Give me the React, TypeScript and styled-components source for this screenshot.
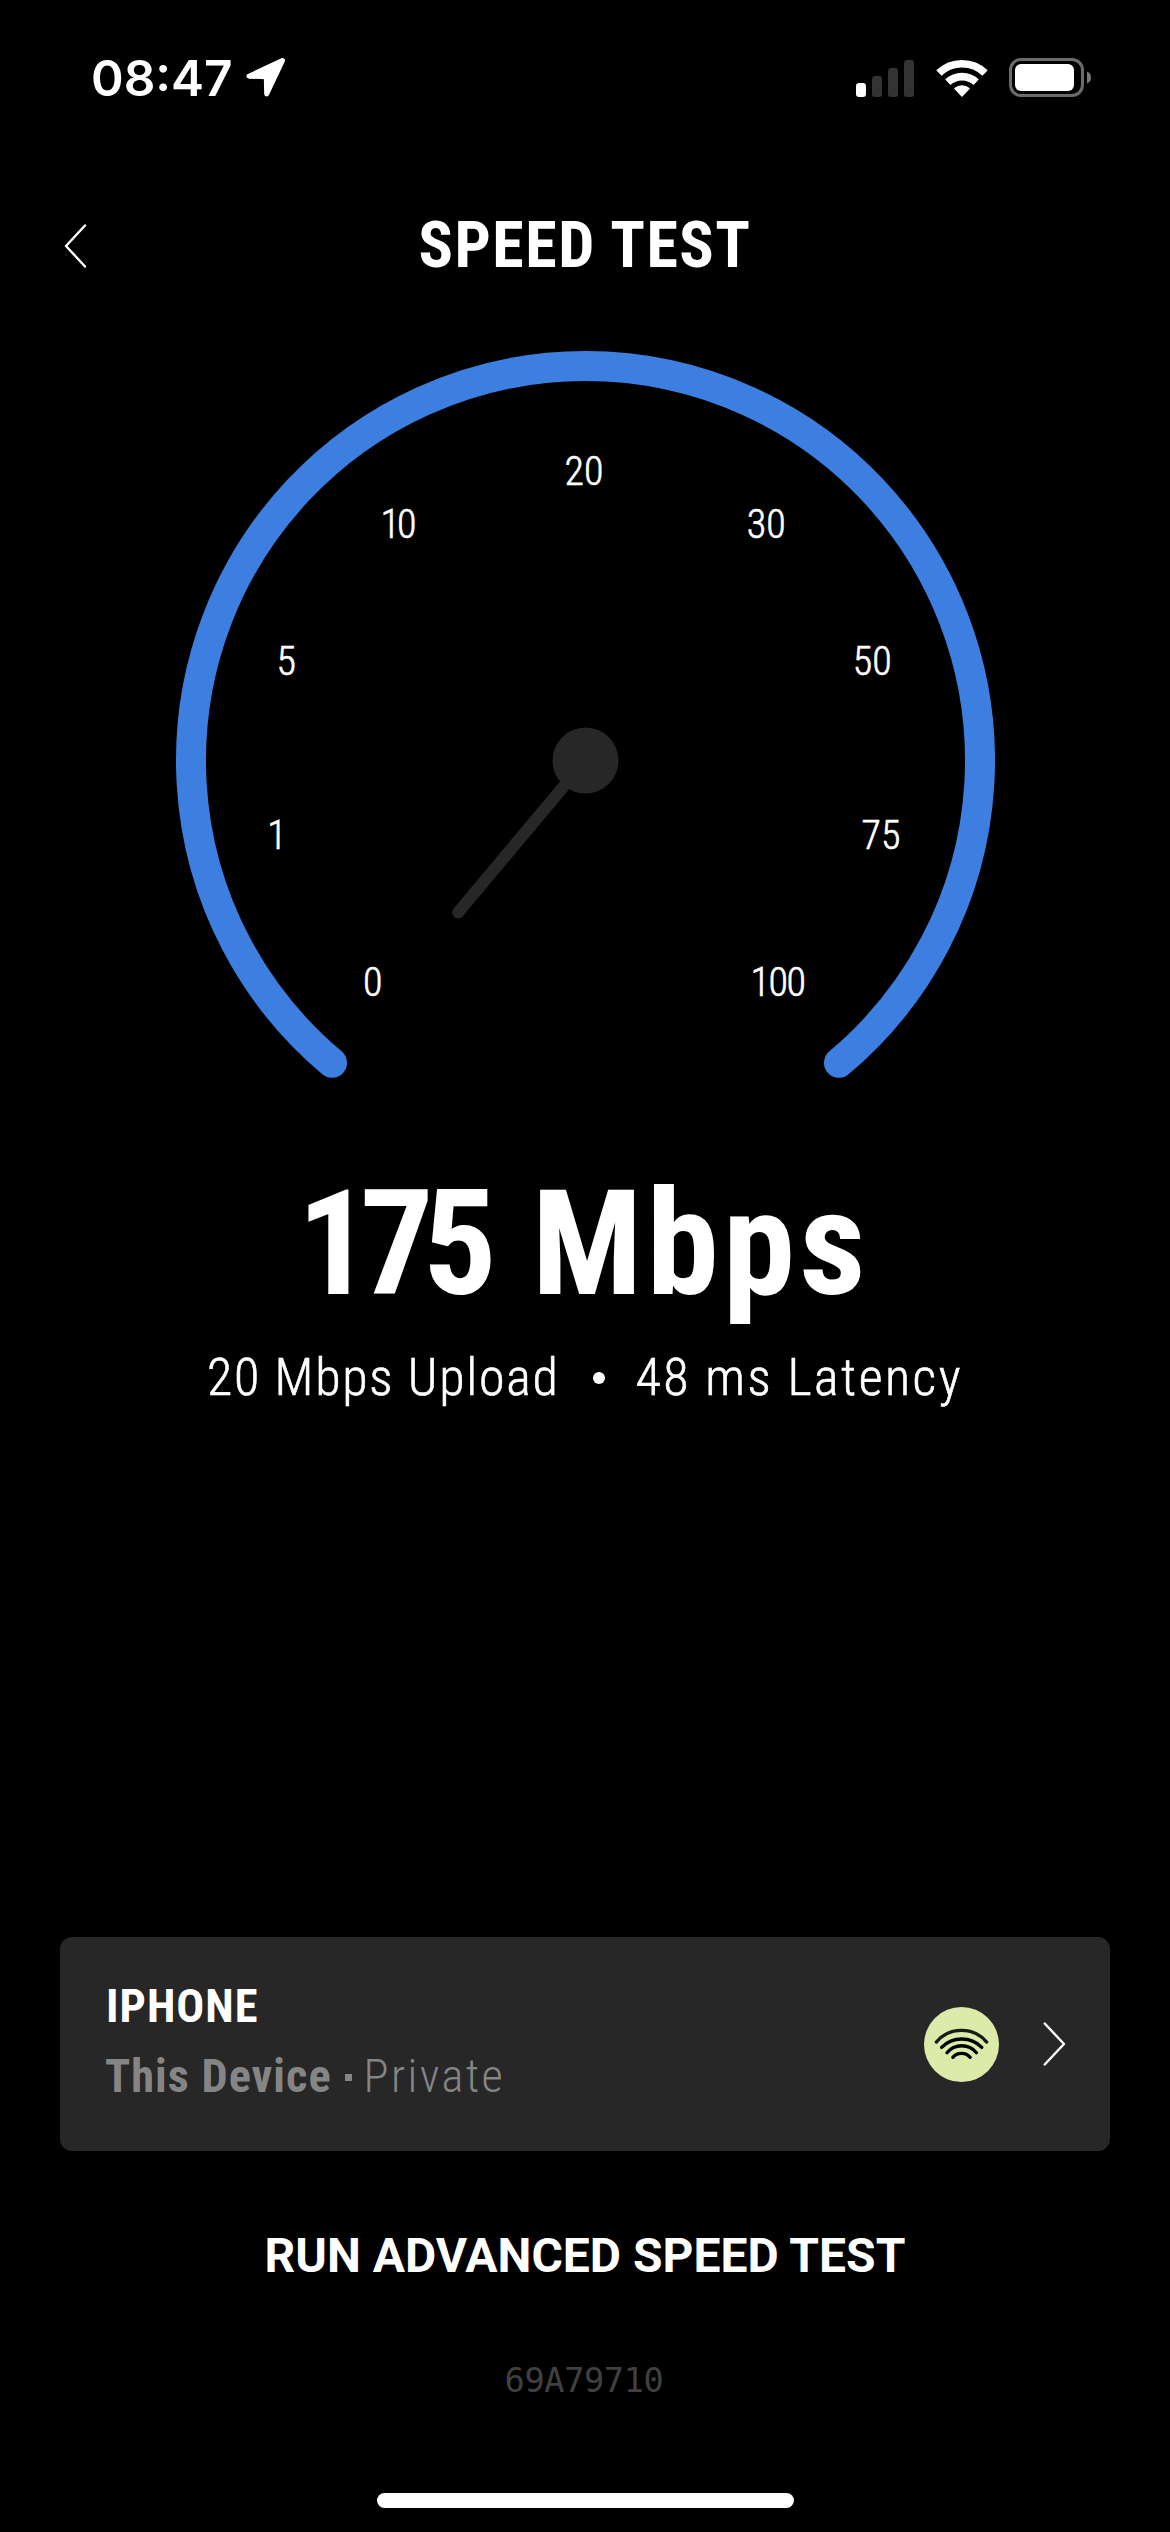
import React from 'react';
import styled, { createGlobalStyle } from 'styled-components';

const GlobalStyle = createGlobalStyle`
  * { box-sizing: border-box; }
  body { margin: 0; background: #000; }
`;

const Screen = styled.main`
  width: 1170px;
  height: 2532px;
  display: flex;
  flex-direction: column;
  align-items: center;
  overflow: hidden;
  background: #000;
  color: #fff;
  font-family: 'Roboto Condensed', Roboto, sans-serif;
`;

const StatusBar = styled.div`
  width: 100%;
  height: 156px;
  padding: 0 79px 0 91px;
  display: flex;
  align-items: center;
  justify-content: space-between;
`;

const StatusGroup = styled.div<{ $gap: number }>`
  display: flex;
  align-items: center;
  gap: ${(p) => p.$gap}px;
`;

const Clock = styled.span`
  font: 600 49.5px/60px Inter, sans-serif;
`;

const Header = styled.header`
  width: 100%;
  height: 180px;
  padding: 0 62px;
  display: grid;
  grid-template-columns: 1fr auto 1fr;
  align-items: center;
`;

const IconButton = styled.button`
  width: 27px;
  padding: 0;
  border: 0;
  background: none;
  color: inherit;
  display: flex;
`;

const Title = styled.h1`
  margin: 0;
  font-size: 64px;
  line-height: 78px;
  font-weight: 700;
  letter-spacing: 1.5px;
`;

const GaugeChart = styled.svg`
  display: block;
  flex: none;
  margin-top: 15px;
`;

const GaugeLabel = styled.text<{ $spacing?: number }>`
  font-size: 40px;
  font-weight: 300;
  letter-spacing: ${(p) => p.$spacing ?? 0}px;
  fill: #fff;
  stroke: #fff;
  stroke-width: 0.6px;
  text-anchor: middle;
`;

const Speed = styled.div`
  margin: 91px 3px 0 0;
  display: flex;
  gap: 46px;
  font-size: 146px;
  line-height: 150px;
  font-weight: 700;
`;

const SpeedPart = styled.span<{ $spacing: number }>`
  letter-spacing: ${(p) => p.$spacing}px;
`;

const Stats = styled.div`
  margin-top: 26px;
  display: flex;
  align-items: center;
  font-size: 52px;
  line-height: 64px;
  font-weight: 300;
  -webkit-text-stroke: 0.6px #fff;
`;

const Stat = styled.span<{ $spacing: number }>`
  letter-spacing: ${(p) => p.$spacing}px;
`;

const Bullet = styled.span`
  width: 12px;
  height: 12px;
  margin: 0 31px 0 33px;
  border-radius: 50%;
  background: #fff;
`;

const DeviceCard = styled.section`
  width: 1050px;
  height: 214px;
  margin-top: auto;
  padding: 0 42px 0 45px;
  display: flex;
  align-items: center;
  justify-content: space-between;
  border-radius: 12px;
  background: #272727;
`;

const DeviceText = styled.div`
  padding-bottom: 6px;
  font-size: 46.4px;
  line-height: 70px;
  font-weight: 700;
`;

const DeviceName = styled.div`
  margin-left: 1px;
  letter-spacing: 1px;
`;

const DeviceMeta = styled.div`
  display: flex;
  align-items: center;
  color: #858585;
  letter-spacing: 1px;
`;

const Dot = styled.span`
  width: 7px;
  height: 7px;
  margin: 3px 12px 0 13px;
  background: #858585;
`;

const Privacy = styled.span`
  font-weight: 300;
  letter-spacing: 2.4px;
`;

const AdvancedButton = styled.button`
  margin-top: 75px;
  padding: 0;
  border: 0;
  background: none;
  color: #fff;
  font: 700 48px/60px Roboto, sans-serif;
`;

const Code = styled.div`
  margin: 75px 2px 0 0;
  color: #404040;
  font: 400 33.6px/40px 'DejaVu Sans Mono', monospace;
  letter-spacing: -0.35px;
`;

const HomeIndicator = styled.div`
  flex: none;
  width: 417px;
  height: 15px;
  margin: 92px 0 24px;
  border-radius: 8px;
  background: #fff;
`;

const LocationIcon = () => (
  <svg width="40" height="42" viewBox="0 0 40 42">
    <path
      d="M36.4 3.6L3 19.2L20.3 19.8L20.7 37Z"
      fill="#fff"
      stroke="#fff"
      strokeWidth="5"
      strokeLinejoin="round"
    />
  </svg>
);

const SignalIcon = () => (
  <svg width="58" height="38" viewBox="0 0 58 38">
    <rect x="0" y="24" width="10" height="14" rx="3" fill="#fff" />
    <rect x="16" y="17" width="10" height="21" rx="3" fill="#333" />
    <rect x="32" y="9" width="10" height="29" rx="3" fill="#333" />
    <rect x="48" y="1" width="10" height="37" rx="3" fill="#333" />
  </svg>
);

const WifiIcon = () => (
  <svg width="52" height="40" viewBox="0 0 52 40">
    <g fill="none" stroke="#fff" strokeWidth="7.6">
      <path d="M2.9 15.1A33.2 33.2 0 0 1 49.1 15.1" />
      <path d="M11.8 24.3A20.5 20.5 0 0 1 40.2 24.3" />
    </g>
    <path
      d="M26 38L18.9 30.5A10.8 10.8 0 0 1 33.1 30.5Z"
      fill="#fff"
      stroke="#fff"
      strokeWidth="1.4"
      strokeLinejoin="round"
    />
  </svg>
);

const BatteryIcon = () => (
  <svg width="82" height="40" viewBox="0 0 82 40">
    <rect x="1.5" y="1.5" width="72" height="36" rx="10.5" fill="none" stroke="#6b6b6b" strokeWidth="3" />
    <rect x="6" y="6" width="59" height="27" rx="6" fill="#fff" />
    <path d="M78 13.5Q82 15 82 19.5T78 25.5Z" fill="#7a7a7a" />
  </svg>
);

const Chevron = ({ back }: { back?: boolean }) => (
  <svg width="27" height="46" viewBox="0 0 27 46">
    <path
      d={back ? 'M23 2.5L4 23L23 43.5' : 'M3.7 2.5L23 23L3.7 43.5'}
      fill="none"
      stroke="#fff"
      strokeWidth="2.4"
      strokeLinecap="round"
      strokeLinejoin="round"
    />
  </svg>
);

const StrengthBadge = () => (
  <svg width="75" height="75" viewBox="0 0 75 75">
    <circle cx="37.5" cy="37.5" r="37.5" fill="#dcebaa" />
    <g fill="none" stroke="#000" strokeWidth="3.3" strokeLinecap="round">
      <path stroke="#1a1a1a" d="M12.3 35.1A32.8 32.8 0 0 1 62.7 35.1" />
      <path d="M17.6 40.4A28.3 28.3 0 0 1 57.8 40.4" />
      <path d="M23 45.7A19 19 0 0 1 52.4 45.7" />
      <path d="M28.8 50.3A11.6 11.6 0 0 1 46.2 50.3" />
    </g>
  </svg>
);

const gaugeLabels = [
  { value: 0, x: 197.7, y: 644.5 },
  { value: 1, x: 102, y: 498 },
  { value: 5, x: 111.3, y: 323.5 },
  { value: 10, x: 222, y: 186.5, spacing: -3 },
  { value: 20, x: 409, y: 133.5 },
  { value: 30, x: 591.3, y: 186.5 },
  { value: 50, x: 697.2, y: 323.5 },
  { value: 75, x: 706, y: 498 },
  { value: 100, x: 602.5, y: 644.5, spacing: -1.5 },
];

const Gauge = () => (
  <GaugeChart width="820" height="728" viewBox="0 0 820 728">
    <path
      d="M157 711.8A394.5 394.5 0 1 1 664 711.8"
      fill="none"
      stroke="#3d7fe0"
      strokeWidth="30"
      strokeLinecap="round"
    />
    {gaugeLabels.map((l) => (
      <GaugeLabel key={l.value} x={l.x} y={l.y} $spacing={l.spacing}>
        {l.value}
      </GaugeLabel>
    ))}
    <path d="M410.5 409.5L283.2 561.3" stroke="#272727" strokeWidth="12" strokeLinecap="round" />
    <circle cx="410.5" cy="409.5" r="33" fill="#272727" />
  </GaugeChart>
);

export default function App() {
  return (
    <>
      <GlobalStyle />
      <Screen>
        <StatusBar>
          <StatusGroup $gap={13}>
            <Clock>08:47</Clock>
            <LocationIcon />
          </StatusGroup>
          <StatusGroup $gap={21.5}>
            <SignalIcon />
            <WifiIcon />
            <BatteryIcon />
          </StatusGroup>
        </StatusBar>
        <Header>
          <IconButton aria-label="Back">
            <Chevron back />
          </IconButton>
          <Title>SPEED TEST</Title>
        </Header>
        <Gauge />
        <Speed>
          <SpeedPart $spacing={-11}>175</SpeedPart>
          <SpeedPart $spacing={4.1}>Mbps</SpeedPart>
        </Speed>
        <Stats>
          <Stat $spacing={1.75}>20 Mbps Upload</Stat>
          <Bullet />
          <Stat $spacing={2.5}>48 ms Latency</Stat>
        </Stats>
        <DeviceCard>
          <DeviceText>
            <DeviceName>IPHONE</DeviceName>
            <DeviceMeta>
              <span>This Device</span>
              <Dot />
              <Privacy>Private</Privacy>
            </DeviceMeta>
          </DeviceText>
          <StatusGroup $gap={42}>
            <StrengthBadge />
            <Chevron />
          </StatusGroup>
        </DeviceCard>
        <AdvancedButton>RUN ADVANCED SPEED TEST</AdvancedButton>
        <Code>69A79710</Code>
        <HomeIndicator />
      </Screen>
    </>
  );
}
